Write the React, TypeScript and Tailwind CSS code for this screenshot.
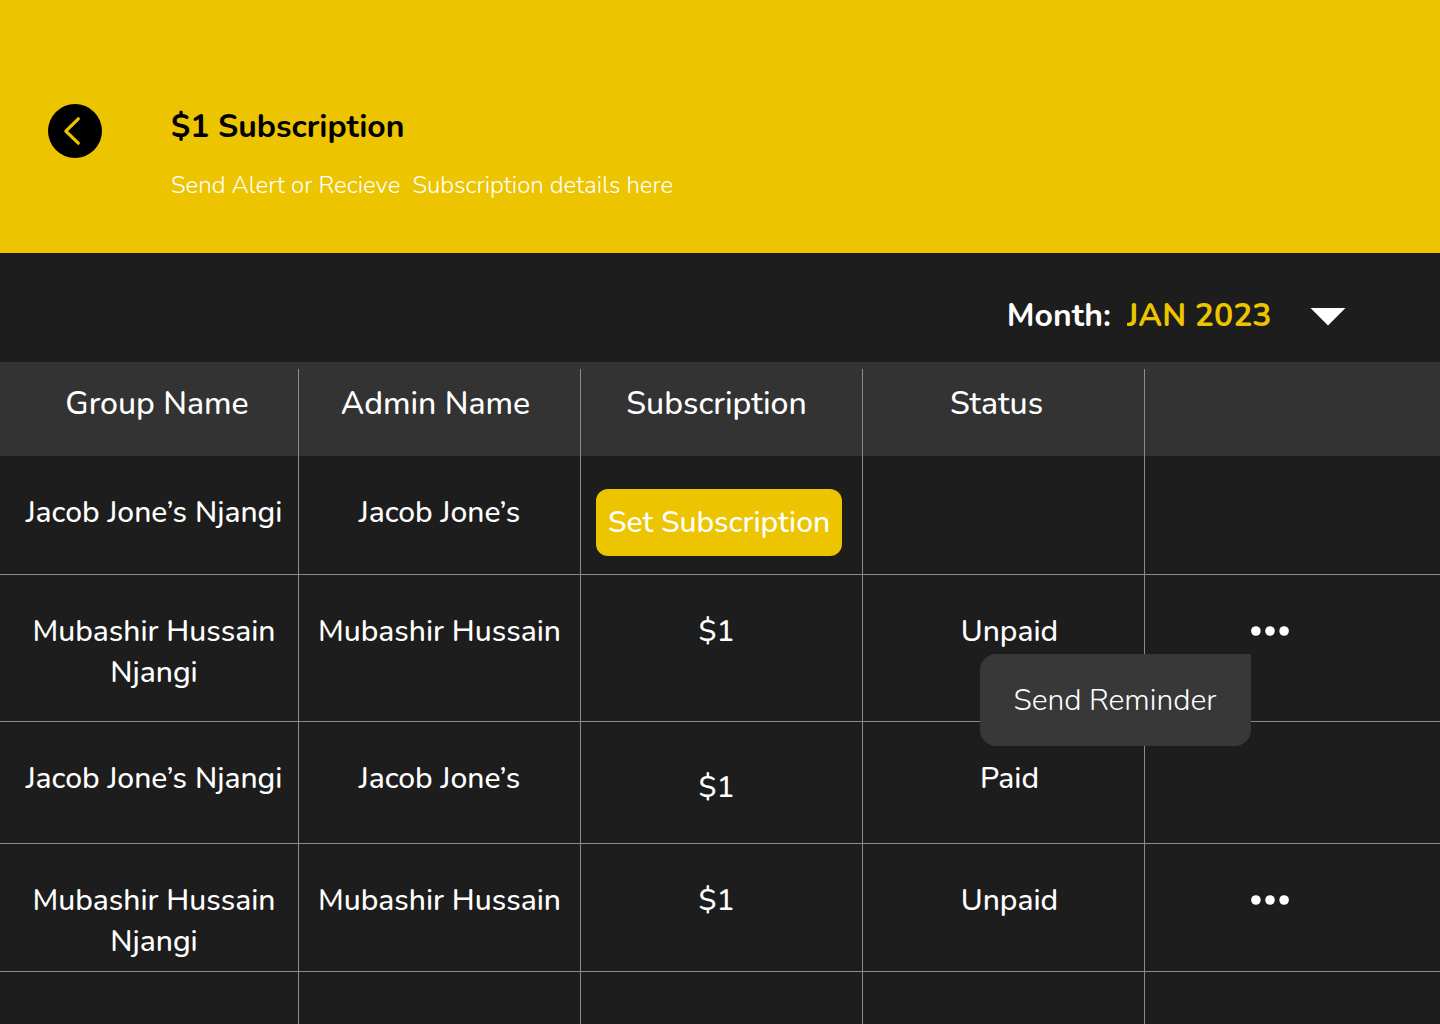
import { useState } from 'react';
import clsx from 'clsx';

interface Subscription {
  id: number;
  group: string;
  admin: string;
  amount?: string;
  status?: 'Paid' | 'Unpaid';
}

const MONTHS = ['JAN 2023', 'FEB 2023', 'MAR 2023'];

const SUBSCRIPTIONS: Subscription[] = [
  { id: 1, group: 'Jacob Jone’s Njangi', admin: 'Jacob Jone’s' },
  { id: 2, group: 'Mubashir Hussain Njangi', admin: 'Mubashir Hussain', amount: '$1', status: 'Unpaid' },
  { id: 3, group: 'Jacob Jone’s Njangi', admin: 'Jacob Jone’s', amount: '$1', status: 'Paid' },
  { id: 4, group: 'Mubashir Hussain Njangi', admin: 'Mubashir Hussain', amount: '$1', status: 'Unpaid' },
];

// Row heights follow the design, they are not all equal
const ROW_HEIGHTS = ['h-[119px]', 'h-[147px]', 'h-[122px]', 'h-[128px]'];

const CELL = 'border-b border-r border-[#8c8c8c] pt-9 align-top';
const LAST_CELL = 'border-b border-[#8c8c8c] pt-9 pr-[46px] align-top';

function PageHeader() {
  return (
    <header className="flex items-start gap-[69px] bg-[#ecc400] px-12 pt-[104px] pb-[51px]">
      <button
        type="button"
        aria-label="Go back"
        className="flex size-[54px] shrink-0 items-center justify-center rounded-full bg-black"
      >
        <svg width="54" height="54" viewBox="0 0 54 54" fill="none" aria-hidden="true">
          <path
            d="M30.3 14.8 17.8 27.2 30.3 39.2"
            stroke="#ecc400"
            strokeWidth="3.2"
            strokeLinecap="round"
            strokeLinejoin="round"
          />
        </svg>
      </button>
      <div className="pt-px">
        <h1 className="text-[32px] leading-[44px] font-bold text-black">$1 Subscription</h1>
        <p className="mt-5 text-2xl leading-[33px] font-[350] whitespace-pre-wrap text-white">
          {'Send Alert or Recieve  Subscription details here'}
        </p>
      </div>
    </header>
  );
}

function MonthPicker() {
  const [month, setMonth] = useState(MONTHS[0]);

  return (
    <div className="flex justify-end gap-4 pt-[41px] pr-[94px] pb-6 text-[32px] leading-[44px] font-bold">
      <label htmlFor="month">Month:</label>
      <div className="relative">
        <select
          id="month"
          value={month}
          onChange={(e) => setMonth(e.target.value)}
          className="block h-11 w-[219px] appearance-none bg-transparent text-[#ecc400]"
        >
          {MONTHS.map((m) => (
            <option key={m}>{m}</option>
          ))}
        </select>
        <svg
          width="36"
          height="18"
          viewBox="0 0 36 18"
          aria-hidden="true"
          className="pointer-events-none absolute top-3.5 right-0"
        >
          <path d="M0.5 0h35L18 17.5z" fill="#fff" />
        </svg>
      </div>
    </div>
  );
}

function RowActions({ open, onToggle }: { open: boolean; onToggle: () => void }) {
  return (
    <div className="relative mx-auto w-[38px]">
      <button type="button" aria-label="More actions" onClick={onToggle} className="flex h-[39px] items-center">
        <svg width="38" height="10" viewBox="0 0 38 10" fill="#fff" aria-hidden="true">
          <circle cx="4.9" cy="5" r="4.8" />
          <circle cx="19" cy="5" r="4.8" />
          <circle cx="33.1" cy="5" r="4.8" />
        </svg>
      </button>
      {open && (
        <button
          type="button"
          className="absolute top-full right-full z-10 mt-1 h-[92px] w-[271px] rounded-2xl rounded-tr-none bg-[#383838] font-[350]"
        >
          Send Reminder
        </button>
      )}
    </div>
  );
}

function HeadCell({ label, className }: { label: string; className?: string }) {
  return (
    <th scope="col" className="p-0 pt-[7px] font-medium">
      <div className={clsx('h-[87px] border-r border-[#8c8c8c] pt-[13px]', className)}>{label}</div>
    </th>
  );
}

export default function App() {
  const [openRow, setOpenRow] = useState<number | null>(2);

  return (
    <div className="min-h-screen overflow-x-hidden bg-[#1d1d1d] font-[Nunito,Lato,sans-serif] text-white">
      <PageHeader />
      <MonthPicker />

      <table className="w-full table-fixed border-separate border-spacing-0 text-center text-[30px] leading-[41px] font-medium">
        <colgroup>
          <col className="w-[299px]" />
          <col className="w-[282px]" />
          <col className="w-[282px]" />
          <col className="w-[282px]" />
          <col />
        </colgroup>
        <thead className="bg-[#333333] text-[32px] leading-[44px]">
          <tr>
            <HeadCell label="Group Name" className="pl-4" />
            <HeadCell label="Admin Name" className="pr-2" />
            <HeadCell label="Subscription" className="pr-2.5" />
            <HeadCell label="Status" className="pr-3.5" />
            <td />
          </tr>
        </thead>
        <tbody>
          {SUBSCRIPTIONS.map((row, i) => (
            <tr key={row.id} className={ROW_HEIGHTS[i]}>
              <td className={clsx(CELL, 'pr-2 pl-[18px]')}>{row.group}</td>
              <td className={CELL}>{row.admin}</td>
              {row.amount ? (
                <td className={clsx(CELL, 'pr-2.5', row.status === 'Paid' && 'pt-[45px]')}>{row.amount}</td>
              ) : (
                <td className="border-r border-b border-[#8c8c8c] pt-[33px] pr-5 pl-[15px] align-top">
                  <button type="button" className="h-[67px] w-full rounded-xl bg-[#ecc400]">
                    Set Subscription
                  </button>
                </td>
              )}
              <td className={clsx(CELL, 'pl-3')}>{row.status}</td>
              <td className={LAST_CELL}>
                {row.status === 'Unpaid' && (
                  <RowActions
                    open={openRow === row.id}
                    onToggle={() => setOpenRow(openRow === row.id ? null : row.id)}
                  />
                )}
              </td>
            </tr>
          ))}
          <tr className="h-[52px]">
            <td className="border-r border-[#8c8c8c]" />
            <td className="border-r border-[#8c8c8c]" />
            <td className="border-r border-[#8c8c8c]" />
            <td className="border-r border-[#8c8c8c]" />
            <td />
          </tr>
        </tbody>
      </table>
    </div>
  );
}
